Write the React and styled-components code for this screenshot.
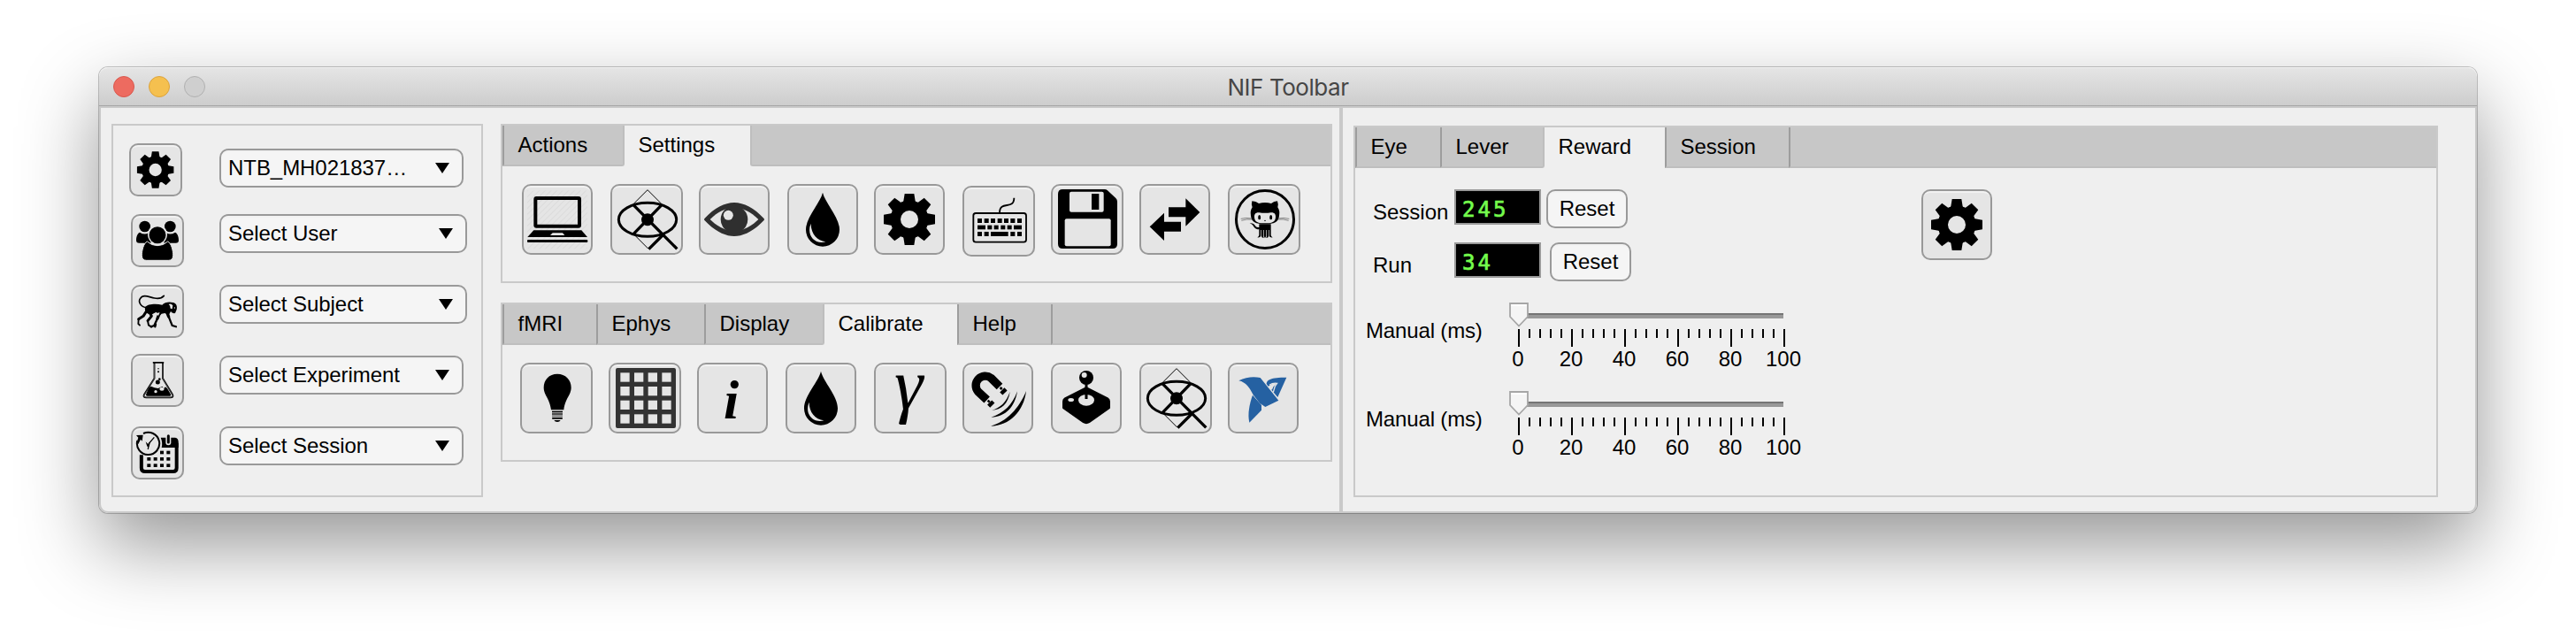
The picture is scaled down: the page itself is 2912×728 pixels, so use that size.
import React from 'react';
import styled, { createGlobalStyle, css } from 'styled-components';

const FACE = '#e5e5e5';
const LINE = '#c9c9c9';

const GlobalStyle = createGlobalStyle`
  *, *::before, *::after { box-sizing: border-box; }
  body {
    margin: 0;
    background: #fff;
    font-family: "Liberation Sans", Arial, sans-serif;
    font-size: 24px;
    color: #000;
  }
  button { font: inherit; color: inherit; border: 0; padding: 0; }
`;

const Desktop = styled.main`
  width: 2912px;
  height: 728px;
  padding: 76px 0 0 112px;
  overflow: hidden;
`;

const Window = styled.section`
  width: 2688px;
  height: 504px;
  border-radius: 10px;
  box-shadow: 0 0 0 1px rgba(0, 0, 0, 0.22), 0 36px 88px rgba(0, 0, 0, 0.42);
`;

const TitleBar = styled.header`
  display: grid;
  grid-template-columns: 1fr auto 1fr;
  align-items: center;
  height: 44px;
  border-radius: 10px 10px 0 0;
  border-bottom: 1px solid #a5a5a5;
  background: linear-gradient(#e5e5e5, #cdcdcd);
  box-shadow: inset 0 1px 0 #f2f2f2;
`;

const Lights = styled.div`
  display: flex;
  gap: 16px;
  padding-left: 16px;
`;

const Light = styled.span`
  width: 24px;
  height: 24px;
  border-radius: 50%;
  background: ${(p) => p.$fill};
  border: 1px solid ${(p) => p.$edge};
`;

const Title = styled.h1`
  margin: 0;
  padding-top: 2px;
  font: 400 26px/40px Inter, "Liberation Sans", sans-serif;
  letter-spacing: -0.45px;
  color: #464646;
`;

const Body = styled.div`
  display: flex;
  height: 460px;
  background: #efefef;
  border: 2px solid ${LINE};
  border-radius: 0 0 10px 10px;
`;

const SelectPanel = styled.aside`
  width: 420px;
  height: 422px;
  margin: 18px 0 0 12px;
  border: 2px solid ${LINE};
`;

const SelectRow = styled.div`
  display: flex;
  align-items: flex-start;
  height: 60px;
  margin-top: ${(p) => p.$gap}px;
  padding-left: ${(p) => p.$indent}px;
`;

const raised = css`
  border-radius: 10px;
  box-shadow: inset 0 0 0 2px #999, inset 0 4px 0 #f2f2f2;
`;

const ToolButton = styled.button`
  ${raised}
  flex: none;
  width: ${(p) => p.$width}px;
  height: ${(p) => p.$height || 80}px;
  margin: ${(p) => p.$drop || 0}px 0 0 ${(p) => p.$gap || 0}px;
  background: ${FACE};
  svg { display: block; width: 100%; height: 100%; overflow: visible; }
`;

const Dropdown = styled.button`
  ${raised}
  display: flex;
  align-items: center;
  justify-content: space-between;
  width: ${(p) => p.$width}px;
  height: 44px;
  margin: ${(p) => p.$drop}px 0 0 auto;
  padding: 0 16px 1px 10px;
  background: #f5f5f5;
  line-height: 43px;
  letter-spacing: -0.05px;
  svg { width: 16px; height: 12px; }
`;

const SelectSlot = styled.div`
  display: flex;
  flex: none;
  margin-left: ${(p) => p.$gap}px;
`;

const Middle = styled.div`
  display: flex;
  flex-direction: column;
  gap: 22px;
  width: 940px;
  margin: 18px 0 0 20px;
`;

const TabGroup = styled.section`
  width: ${(p) => p.$width}px;
  height: ${(p) => p.$height}px;
  margin: ${(p) => p.$margin || 0};
  border: 2px solid ${LINE};
`;

const TabBar = styled.nav`
  display: flex;
  height: 46px;
`;

const Tab = styled.button`
  width: ${(p) => p.$width}px;
  height: 46px;
  padding: 0 0 3px 15.5px;
  text-align: left;
  line-height: 43px;
  background: #c7c7c7;
  border-left: 2px solid #9d9d9d;
  border-bottom: 2px solid #bebebe;
  ${(p) => p.$beforeActive && css`
    border-right: 2px solid #bebebe;
    border-bottom-right-radius: 3px;
  `}
  ${(p) => p.$active && css`
    background: #efefef;
    border: 0;
  `}
`;

const TabFill = styled.div`
  flex: 1;
  background: #c7c7c7;
  border-bottom: 2px solid #bebebe;
  border-left: 2px solid ${(p) => (p.$soft ? '#bebebe' : '#9d9d9d')};
  border-bottom-left-radius: ${(p) => (p.$soft ? 3 : 0)}px;
`;

const ToolRow = styled.div`
  display: flex;
  align-items: flex-start;
  padding-top: 20px;
`;

const Divider = styled.div`
  width: 4px;
  margin-left: 8px;
  background: ${LINE};
`;

const RewardPane = styled.div`
  display: flex;
  align-items: flex-start;
  padding-top: 24px;
`;

const Controls = styled.div`
  width: 640px;
`;

const CounterRow = styled.div`
  display: flex;
  align-items: flex-start;
  height: 44px;
  margin-bottom: ${(p) => p.$after}px;
  padding-left: 20px;
`;

const CounterLabel = styled.label`
  width: 92px;
  line-height: 51px;
  white-space: nowrap;
`;

const Readout = styled.output`
  width: 98px;
  height: 40px;
  border: 2px solid #999;
  background: #000;
  color: #74fb4c;
  padding-left: 7px;
  font: 400 24px/43px "DejaVu Sans Mono", monospace;
  letter-spacing: 3.1px;
  -webkit-text-stroke: 0.7px #74fb4c;
`;

const ResetButton = styled.button`
  ${raised}
  width: 92px;
  height: 44px;
  margin-left: ${(p) => p.$gap}px;
  padding-bottom: 1px;
  background: #f5f5f5;
  line-height: 43px;
`;

const SliderRow = styled.div`
  display: flex;
  height: 76px;
  margin-bottom: 24px;
  padding-left: 12px;
`;

const SliderLabel = styled.label`
  width: 162px;
  line-height: 64px;
  letter-spacing: -0.15px;
  white-space: nowrap;
`;

const Slider = styled.div`
  width: 322px;
`;

const Rail = styled.div`
  position: relative;
  height: 30px;
  padding: 12px 12px 0 10px;
`;

const Track = styled.div`
  height: 6px;
  background: #999;
  border-top: 2px solid #757575;
`;

const Thumb = styled.svg`
  position: absolute;
  left: 0;
  top: 0;
  width: 22px;
  height: 28px;
`;

const Ticks = styled.div`
  display: flex;
  justify-content: space-between;
  width: 302px;
  height: 20px;
  margin-left: 10px;
`;

const Tick = styled.span`
  width: 2px;
  height: ${(p) => (p.$major ? 20 : 10)}px;
  background: #000;
`;

const TickLabels = styled.div`
  display: flex;
  width: 360px;
  margin: 2px 0 0 -20px;
  line-height: 24px;
  span { width: 60px; text-align: center; }
`;

function GearShape({ cx, cy, scale = 1 }) {
  return (
    <g transform={`translate(${cx} ${cy}) scale(${scale})`}>
      <circle r="64" />
      {[0, 45, 90, 135, 180, 225, 270, 315].map((a) => (
        <path key={a} d="M-16-87H16L20-62L28-55H-28L-20-62Z" transform={`rotate(${a})`} />
      ))}
      <circle r="30" fill={FACE} />
    </g>
  );
}

const Gear = () => (
  <svg viewBox="0 0 240 240"><GearShape cx={120} cy={120} /></svg>
);

const SmallGear = () => (
  <svg viewBox="0 0 180 180"><GearShape cx={89} cy={90} scale={0.715} /></svg>
);

const People = () => (
  <svg viewBox="0 0 180 180">
    <circle cx="47" cy="42" r="19" />
    <circle cx="133" cy="42" r="19" />
    <path d="M30 62Q46 72 60 64L68 98H28Q18 98 18 89C18 78 21 66 30 62Z" />
    <path d="M150 62Q134 72 120 64L112 98H152Q162 98 162 89C162 78 159 66 150 62Z" />
    <circle cx="90" cy="70" r="33" fill={FACE} />
    <path d="M55 93Q70 107 90 107Q110 107 125 93C138 100 143 125 143 140Q143 157 127 157H53Q37 157 37 140C37 125 42 100 55 93Z" stroke={FACE} strokeWidth="3" />
    <circle cx="90" cy="71" r="28.5" />
  </svg>
);

const Monkey = () => (
  <svg viewBox="0 0 180 180">
    <g fill="none" stroke="#000" strokeLinecap="round" strokeLinejoin="round">
      <path strokeWidth="5" d="M54 77C34 76 23 58 32 46C42 30 62 42 80 45C95 48 105 45 112 37" />
      <path strokeWidth="9" d="M56 84L42 106L26 116" />
      <path strokeWidth="5.5" d="M26 115L25 132L30 137" />
      <path strokeWidth="9" d="M60 88L70 106L57 122" />
      <path strokeWidth="6" d="M57 122L60 137L70 142" />
      <path strokeWidth="10" d="M100 88L90 114" />
      <path strokeWidth="7" d="M90 114L79 138L68 142M84 134L82 142" />
      <path strokeWidth="10" d="M120 88L128 108" />
      <path strokeWidth="6.5" d="M128 108L140 138L153 142" />
    </g>
    <path d="M48 76C56 65 84 63 106 68C114 60 128 56 142 60C154 62 158 72 155 84L150 96Q140 98 135 90L129 101L115 96L104 98L94 108L86 92L72 100C56 102 45 92 48 76Z" />
    <path d="M128 66Q136 62 142 70L140 82L134 80Q134 70 128 66Z" fill={FACE} />
    <path d="M84 96L93 105L98 94Z" fill={FACE} />
    <circle cx="148" cy="78" r="2" fill={FACE} />
  </svg>
);

const Flask = () => (
  <svg viewBox="0 0 180 180">
    <rect x="74" y="27" width="38" height="5" rx="2" />
    <path d="M79.500 30V83L45 138Q40 148 52 148H134Q146 148 141 138L108 83V30" fill="none" stroke="#000" strokeWidth="5.500" />
    <path d="M79.500 34V84L46 138Q41 147.500 52 147.500H134Q145 147.500 140 138L108 84V34" fill="none" stroke="#aaa" strokeWidth="1.200" />
    <path d="M61 114L68 110Q80 116 92 117L104 112Q114 107 123 117L135 137Q137 143 130 143H56Q49 143 52 136Z" />
    <circle cx="84" cy="128" r="5" fill={FACE} />
    <ellipse cx="105" cy="119" rx="8" ry="6" fill={FACE} />
    <circle cx="112" cy="112" r="4" fill={FACE} />
    <circle cx="91" cy="96" r="7.500" />
    <circle cx="97" cy="86" r="4" />
    <circle cx="93" cy="50" r="2.200" />
    <circle cx="93" cy="61" r="3" />
  </svg>
);

const CalendarClock = () => (
  <svg viewBox="0 0 180 180">
    <path d="M35.500 97V141Q35.500 153 48 153H143Q155 153 155 141V56" fill="none" stroke="#000" strokeWidth="12" />
    <path d="M101 38H150Q161 40 161 52V72H104C107 60 106 50 101 38Z" />
    <path d="M127 30V55" stroke={FACE} strokeWidth="18" strokeLinecap="round" />
    <path d="M127 32V54" stroke="#000" strokeWidth="9" strokeLinecap="round" />
    <path d="M42 24A38 38 0 1 1 22 48" fill="none" stroke="#000" strokeWidth="6" />
    <path d="M18 30L41 29L38 50L33 44L25 60L19 56L25 38Z" />
    <path d="M79 37L61 58L58 78" fill="none" stroke="#000" strokeWidth="4" />
    <path d="M50 52L58 60L66 52L62 68H55Z" />
    {[[105, 89], [127, 89], [61, 111], [83, 111], [105, 111], [127, 111], [61, 133], [83, 133], [105, 133], [127, 133]].map(([x, y]) => (
      <rect key={`${x}-${y}`} x={x - 6} y={y - 6} width="12" height="11" />
    ))}
  </svg>
);

const Laptop = () => (
  <svg viewBox="0 0 240 240">
    <defs>
      <pattern id="hatch" width="14" height="14" patternUnits="userSpaceOnUse" patternTransform="rotate(45)">
        <rect width="3" height="14" fill="#000" opacity="0.045" />
      </pattern>
    </defs>
    <rect x="18" y="22" width="204" height="198" fill="url(#hatch)" />
    <rect x="46" y="48" width="149" height="95" rx="3" fill="none" stroke="#000" strokeWidth="12" />
    <path d="M40 157H202L222 180H19Z" />
    <path d="M104 166H138L145 174H96Z" fill={FACE} />
    <rect x="18" y="189" width="205" height="9" rx="3" />
  </svg>
);

const Reticle = () => (
  <svg viewBox="0 0 246 240">
    <g fill="none" stroke="#000">
      <path d="M78 68L126 20L174 68M80 171L128 219" strokeWidth="3" />
      <ellipse cx="126" cy="121" rx="98" ry="57" strokeWidth="9" />
      <path d="M78 71L226 220M174 71L78 170M180 171L130 221" strokeWidth="10" />
    </g>
    <circle cx="126" cy="121" r="21" />
  </svg>
);

const Eye = () => (
  <svg viewBox="0 0 240 240">
    <path fill="#2f2f2f" d="M20 116C52 82 88 63 120 63C152 63 188 82 220 116Q224 120 220 124C188 158 152 177 120 177C88 177 52 158 20 124Q16 120 20 116Z" />
    <path fill={FACE} d="M38 120C64 94 92 80 120 80C148 80 176 94 202 120C176 146 148 159 120 159C92 159 64 146 38 120Z" />
    <circle cx="120" cy="120" r="46" fill="#2f2f2f" />
    <circle cx="100" cy="106" r="16.500" fill={FACE} />
  </svg>
);

const Drop = () => (
  <svg viewBox="0 0 240 240">
    <path d="M120 29C128 64 177 112 177 155A57 57 0 0 1 63 155C63 112 112 64 120 29Z" />
    <path fill={FACE} d="M80 134C64 170 90 206 130 196C100 192 80 168 80 134Z" />
  </svg>
);

const Keyboard = () => (
  <svg viewBox="0 0 246 240">
    <path d="M126 92C126 48 175 84 175 41" fill="none" stroke="#000" strokeWidth="5.500" />
    <rect x="37" y="93" width="179" height="98" rx="8" fill="none" stroke="#000" strokeWidth="5.500" />
    {[51, 74, 96, 119, 141, 163, 186].map((x) => <rect key={x} x={x} y="111" width="15" height="15" />)}
    {[[51, 27], [85, 15], [107, 15], [130, 15], [152, 15], [174, 27]].map(([x, w]) => <rect key={x} x={x} y="134" width={w} height="14" />)}
    {[[51, 15], [74, 15], [96, 59], [163, 15], [186, 15]].map(([x, w]) => <rect key={x} x={x} y="156" width={w} height="15" />)}
  </svg>
);

const Floppy = () => (
  <svg viewBox="0 0 246 240">
    <path d="M40 18H182Q188 18 192 22L220 48Q225 53 225 60V203Q225 219 209 219H40Q24 219 24 203V34Q24 18 40 18Z" />
    <rect x="63" y="26" width="116" height="69" rx="6" fill={FACE} />
    <rect x="138" y="33" width="25" height="54" />
    <rect x="47" y="118" width="156" height="93" rx="6" fill={FACE} />
  </svg>
);

const Swap = () => (
  <svg viewBox="0 0 240 240">
    <path d="M99 79H157V49L205 96L157 143V112H99Z" />
    <path d="M35 145L84 98V128H141V161H84V192Z" />
  </svg>
);

const Octocat = () => (
  <svg viewBox="0 0 246 240">
    <circle cx="126" cy="120" r="97.500" fill="none" stroke="#000" strokeWidth="9" />
    <path d="M82 58Q96 59 105 66Q126 60 147 66Q156 59 168 58Q172 68 169 79Q177 90 174 108C172 128 158 136 126 136C94 136 80 128 78 108Q75 90 83 79Q79 68 82 58Z" />
    <path fill={FACE} d="M106 97Q126 100 146 97C158 96 163 103 162 113C161 129 149 133 126 133C103 133 91 129 90 113C89 103 94 96 106 97Z" />
    <ellipse cx="107" cy="113" rx="4.500" ry="8" />
    <ellipse cx="146" cy="113" rx="4.500" ry="8" />
    <path d="M123 124Q126 121 129 124L126 127Z" />
    <path d="M106 136H146V174Q148 179 152 181Q142 182 140 176V156H138V178Q137 183 130 183L132 176V156H130V176L126 184L122 176V156H120V176L122 183Q115 183 114 178V156H112V176Q110 182 100 181Q104 179 106 174V154C86 154 90 138 74 133Q88 132 94 143Q98 148 106 147Z" />
    <path d="M44 118Q60 113 84 117M46 124Q62 118 84 120M168 117Q190 113 208 118M168 120Q190 118 206 124" fill="none" stroke="#222" strokeWidth="1.500" />
  </svg>
);

const Bulb = () => (
  <svg viewBox="0 0 246 240">
    <path d="M126 38C154 38 173 58 173 84C173 110 154 118 148 160H105C99 118 80 110 80 84C80 58 98 38 126 38Z" />
    <rect x="108" y="164" width="36" height="5" />
    <rect x="108" y="172" width="36" height="4" />
    <rect x="108" y="178" width="36" height="6" fill="#777" />
    <rect x="108" y="186" width="36" height="5" rx="2" />
    <path d="M115 195H137Q134 201 126 201Q118 201 115 195Z" />
  </svg>
);

const Grid = () => (
  <svg viewBox="0 0 246 240">
    <rect x="24" y="18" width="204" height="204" rx="6" fill="#333" />
    {[0, 1, 2, 3].map((r) => [0, 1, 2, 3].map((c) => (
      <rect key={`${r}${c}`} x={40 + c * 47} y={34 + r * 47} width="31" height="31" fill={FACE} />
    )))}
  </svg>
);

const Symbol = styled.span`
  display: block;
  height: 80px;
  line-height: ${(p) => p.$line}px;
  padding-left: ${(p) => p.$left}px;
  text-align: left;
  font-family: "Liberation Serif", "Times New Roman", serif;
  font-size: ${(p) => p.$size}px;
  font-style: italic;
  font-weight: ${(p) => p.$weight};
`;

const Info = () => <Symbol $size={62} $line={84} $left={30} $weight={700}>i</Symbol>;

const Gamma = () => <Symbol $size={82} $line={50} $left={23} $weight={400}>γ</Symbol>;

const Magnet = () => (
  <svg viewBox="0 0 240 240">
    <g fill="none" stroke="#000" strokeWidth="28">
      <path d="M126 81L97 52A32 32 0 0 0 53 98L83 126" />
      <path d="M134.500 92.500L144 102M92 135L101.500 144.500" strokeWidth="22" />
      <path d="M128 84L134 90M86 128L92 134" strokeWidth="8" />
    </g>
    <path d="M161 98C156 138 132 160 99 161C128 154 150 132 161 98Z" />
    <path d="M186 97C178 148 148 184 97 185C140 172 170 142 186 97Z" />
    <path d="M216 96C208 165 160 214 96 215C150 200 192 155 216 96Z" />
  </svg>
);

const Joystick = () => (
  <svg viewBox="0 0 240 240">
    <path d="M120 88L191 124Q195 127 195 132V152L128 199Q120 204 112 199L45 152V132Q45 127 49 124Z" stroke="#000" strokeWidth="12" strokeLinejoin="round" />
    <ellipse cx="120" cy="127" rx="27" ry="19" fill={FACE} />
    <ellipse cx="68" cy="126" rx="10" ry="6" fill={FACE} />
    <path d="M120 70V123" stroke="#000" strokeWidth="9" />
    <circle cx="120" cy="51" r="24" />
    <circle cx="113" cy="42" r="9" fill={FACE} />
  </svg>
);

const Eagle = () => (
  <svg viewBox="0 0 240 240" fill="#2561a2">
    <path d="M37 61C62 48 88 46 110 51L172 128L127 150L108 137L86 109C74 86 62 66 37 61Z" />
    <path d="M84 110L114 144V161L73 203C66 172 74 138 84 110Z" />
    <path d="M131 72C132 58 144 50 199 50L169 117L148 92Q153 89 154 82L166 70Q152 69 144 76L137 80Z" />
    <path d="M141 76Q152 68 167 70L160 80L154 100" fill="none" stroke={FACE} strokeWidth="4" />
  </svg>
);

const Caret = () => (
  <svg viewBox="0 0 16 12"><path d="M0 0H16L8 12Z" /></svg>
);

const selectors = [
  { label: 'NTB_MH021837…', Icon: SmallGear, gap: 20, indent: 18, slot: 42, width: 276, drop: 6 },
  { label: 'Select User', Icon: People, gap: 20, indent: 20, slot: 40, width: 280, drop: 0 },
  { label: 'Select Subject', Icon: Monkey, gap: 20, indent: 20, slot: 40, width: 280, drop: 0 },
  { label: 'Select Experiment', Icon: Flask, gap: 18, indent: 20, slot: 40, width: 276, drop: 2 },
  { label: 'Select Session', Icon: CalendarClock, gap: 22, indent: 20, slot: 40, width: 276, drop: 0 },
];

const settingsTools = [
  { Icon: Laptop, gap: 22, width: 80 },
  { Icon: Reticle, gap: 20, width: 82 },
  { Icon: Eye, gap: 18, width: 80 },
  { Icon: Drop, gap: 20, width: 80 },
  { Icon: Gear, gap: 18, width: 80 },
  { Icon: Keyboard, gap: 20, width: 82, drop: 2 },
  { Icon: Floppy, gap: 18, width: 82 },
  { Icon: Swap, gap: 18, width: 80 },
  { Icon: Octocat, gap: 20, width: 82 },
];

const calibrateTools = [
  { Icon: Bulb, gap: 20, width: 82 },
  { Icon: Grid, gap: 18, width: 82 },
  { Icon: Info, gap: 18, width: 80 },
  { Icon: Drop, gap: 20, width: 80 },
  { Icon: Gamma, gap: 20, width: 82 },
  { Icon: Magnet, gap: 18, width: 80 },
  { Icon: Joystick, gap: 20, width: 80 },
  { Icon: Reticle, gap: 20, width: 82 },
  { Icon: Eagle, gap: 18, width: 80 },
];

function Tabs({ items, active }) {
  return (
    <TabBar>
      {items.map(([name, width], i) => (
        <Tab key={name} $width={width} $active={i === active} $beforeActive={i === active - 1}>
          {name}
        </Tab>
      ))}
      <TabFill $soft={active === items.length - 1} />
    </TabBar>
  );
}

function Tools({ items }) {
  return (
    <ToolRow>
      {items.map(({ Icon, gap, width, drop }, i) => (
        <ToolButton key={i} $gap={gap} $width={width} $drop={drop}><Icon /></ToolButton>
      ))}
    </ToolRow>
  );
}

function Counter({ label, value, gap, after }) {
  return (
    <CounterRow $after={after}>
      <CounterLabel>{label}</CounterLabel>
      <Readout>{value}</Readout>
      <ResetButton $gap={gap}>Reset</ResetButton>
    </CounterRow>
  );
}

function ManualSlider() {
  return (
    <SliderRow>
      <SliderLabel>Manual (ms)</SliderLabel>
      <Slider>
        <Rail>
          <Track />
          <Thumb viewBox="0 0 22 28">
            <path d="M1 1H21V16L11 26.500L1 16Z" fill="#f5f5f5" stroke="#a6a6a6" strokeWidth="1.800" />
            <path d="M2 3H20" stroke="#fff" strokeWidth="2" />
          </Thumb>
        </Rail>
        <Ticks>
          {Array.from({ length: 26 }, (_, i) => <Tick key={i} $major={i % 5 === 0} />)}
        </Ticks>
        <TickLabels>
          {[0, 20, 40, 60, 80, 100].map((n) => <span key={n}>{n}</span>)}
        </TickLabels>
      </Slider>
    </SliderRow>
  );
}

export default function App() {
  return (
    <Desktop>
      <GlobalStyle />
      <Window>
        <TitleBar>
          <Lights>
            <Light $fill="#ed6b60" $edge="#d9574d" />
            <Light $fill="#f5c04f" $edge="#dca33c" />
            <Light $fill="#cfcfcf" $edge="#b0b0b0" />
          </Lights>
          <Title>NIF Toolbar</Title>
        </TitleBar>
        <Body>
          <SelectPanel>
            {selectors.map(({ label, Icon, gap, indent, slot, width, drop }) => (
              <SelectRow key={label} $gap={gap} $indent={indent}>
                <ToolButton $width={60} $height={60}><Icon /></ToolButton>
                <SelectSlot $gap={slot}>
                  <Dropdown $width={width} $drop={drop}>{label}<Caret /></Dropdown>
                </SelectSlot>
              </SelectRow>
            ))}
          </SelectPanel>
          <Middle>
            <TabGroup $width={940} $height={180}>
              <Tabs items={[['Actions', 138], ['Settings', 142]]} active={1} />
              <Tools items={settingsTools} />
            </TabGroup>
            <TabGroup $width={940} $height={180}>
              <Tabs items={[['fMRI', 106], ['Ephys', 122], ['Display', 136], ['Calibrate', 150], ['Help', 106]]} active={3} />
              <Tools items={calibrateTools} />
            </TabGroup>
          </Middle>
          <Divider />
          <TabGroup $width={1226} $height={420} $margin="20px 0 0 12px">
            <Tabs items={[['Eye', 96], ['Lever', 118], ['Reward', 136], ['Session', 140]]} active={2} />
            <RewardPane>
              <Controls>
                <Counter label="Session" value="245" gap={6} after={16} />
                <Counter label="Run" value="34" gap={10} after={24} />
                <ManualSlider />
                <ManualSlider />
              </Controls>
              <ToolButton $width={80}><Gear /></ToolButton>
            </RewardPane>
          </TabGroup>
        </Body>
      </Window>
    </Desktop>
  );
}
